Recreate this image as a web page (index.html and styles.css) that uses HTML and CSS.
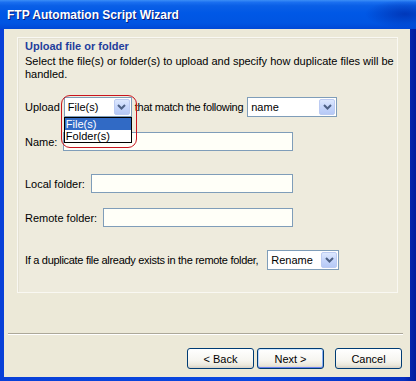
FILE: index.html
```html
<!DOCTYPE html>
<html lang="en">
<head>
  <meta charset="UTF-8" />
  <title>FTP Automation Script Wizard</title>
  <link rel="stylesheet" href="styles.css">
</head>
<body>
  <div class="window">
    <div class="titlebar">
      <span class="title">FTP Automation Script Wizard</span>
    </div>

    <div class="client">
      <div class="panel">
        <h1 class="heading">Upload file or folder</h1>
        <p class="desc">
          Select the file(s) or folder(s) to upload and specify how duplicate files will be<br>
          handled.
        </p>

        <div class="row row-upload">
          <span class="label">Upload</span>
          <div class="combo combo-type">
            <span class="combo-value">File(s)</span>
            <span class="combo-btn">
              <svg width="9" height="6" viewBox="0 0 9 6"><path d="M1 1 L4.5 4.5 L8 1" fill="none" stroke="#4d6185" stroke-width="2"/></svg>
            </span>
            <ul class="combo-list">
              <li class="selected">File(s)</li>
              <li>Folder(s)</li>
            </ul>
            <div class="callout"></div>
          </div>
          <span class="label label-match">that match the following</span>
          <div class="combo combo-match">
            <span class="combo-value">name</span>
            <span class="combo-btn">
              <svg width="9" height="6" viewBox="0 0 9 6"><path d="M1 1 L4.5 4.5 L8 1" fill="none" stroke="#4d6185" stroke-width="2"/></svg>
            </span>
          </div>
        </div>

        <div class="row row-field row-name">
          <span class="label">Name:</span>
          <div class="textbox"></div>
        </div>

        <div class="row row-field row-local">
          <span class="label">Local folder:</span>
          <div class="textbox"></div>
        </div>

        <div class="row row-field row-remote">
          <span class="label">Remote folder:</span>
          <div class="textbox"></div>
        </div>

        <div class="row row-dup">
          <span class="label">If a duplicate file already exists in the remote folder,</span>
          <div class="combo combo-dup">
            <span class="combo-value">Rename</span>
            <span class="combo-btn">
              <svg width="9" height="6" viewBox="0 0 9 6"><path d="M1 1 L4.5 4.5 L8 1" fill="none" stroke="#4d6185" stroke-width="2"/></svg>
            </span>
          </div>
        </div>
      </div>

      <div class="separator"></div>

      <div class="buttons">
        <button class="btn">&lt; Back</button>
        <button class="btn btn-default">Next &gt;</button>
        <button class="btn btn-cancel">Cancel</button>
      </div>
    </div>
  </div>
</body>
</html>
```

FILE: styles.css
```css
* {
  box-sizing: border-box;
  margin: 0;
  padding: 0;
}

body {
  background: #ffffff;
  font-family: 'Liberation Sans', Arial, sans-serif;
  font-size: 11px;
  color: #000;
}

.window {
  width: 416px;
  height: 381px;
  display: flex;
  flex-direction: column;
  padding: 0 6px 4px 4px;
  background: linear-gradient(90deg, #0840d8 0%, #0a48e0 60%, #0730c0 97%, #001c9c 100%);
}

.titlebar {
  height: 29px;
  margin: 0 -6px 0 -4px;
  padding: 1px 0 0 7px;
  display: flex;
  align-items: center;
  background:
    radial-gradient(ellipse 40px 14px at 405px 14px, rgba(0, 30, 150, 0.55), rgba(0, 30, 150, 0)),
    linear-gradient(180deg, #3c8ef6 0%, #1a6ff0 8%, #0a5fe6 20%, #0058e6 45%, #0055e2 80%, #0048d6 100%);
}

.title {
  color: #ffffff;
  font-weight: bold;
  font-size: 12px;
  text-shadow: 1px 1px 0 #0a1a78;
}

.client {
  flex: 1;
  background: #ece9d8;
  display: flex;
  flex-direction: column;
  padding: 8px 0 0 0;
}

.panel {
  height: 256px;
  margin: 0 12px 0 13px;
  padding: 2px 6px 0 7px;
  border: 1px solid #f9f8f2;
  box-shadow: inset 1px 1px 0 #e4e1d2;
  background: #eeebdd;
}

.heading {
  font-size: 11px;
  font-weight: bold;
  line-height: 13px;
  color: #1f3e9c;
}

.desc {
  margin-top: 2px;
  line-height: 13px;
  white-space: nowrap;
}

.row {
  display: flex;
  align-items: center;
}

.row-upload {
  margin-top: 16px;
  height: 20px;
}

.row-upload .label {
  margin-right: 4px;
}

.label-match {
  margin-left: 3px;
  margin-right: 8px;
  letter-spacing: -0.3px;
}

.row-field {
  width: 268px;
  height: 19px;
}

.row-field .label {
  margin-right: 6px;
}

.row-name {
  margin-top: 15px;
}

.row-local {
  margin-top: 23px;
}

.row-remote {
  margin-top: 15px;
}

.row-dup {
  margin-top: 23px;
  height: 20px;
}

.row-dup .label {
  margin-right: 9px;
  letter-spacing: -0.3px;
}

.textbox {
  flex: 1;
  height: 19px;
  border: 1px solid #7f9db9;
  background: #fffff8;
}

.combo {
  position: relative;
  height: 20px;
  border: 1px solid #7f9db9;
  background: #ffffff;
  display: flex;
  align-items: center;
  padding-left: 3px;
}

.combo-type {
  width: 68px;
}

.combo-match {
  width: 90px;
}

.combo-dup {
  width: 72px;
}

.combo-value {
  flex: 1;
}

.combo-btn {
  width: 16px;
  height: 16px;
  margin-right: 1px;
  border: 1px solid #bccbf2;
  border-radius: 2px;
  background: linear-gradient(180deg, #dde8fe 0%, #c6d6fb 50%, #b6c9f6 100%);
  display: flex;
  align-items: center;
  justify-content: center;
}

.combo-list {
  position: absolute;
  top: 19px;
  left: -1px;
  width: 68px;
  list-style: none;
  border: 1px solid #000000;
  background: #ffffff;
  z-index: 2;
}

.combo-list li {
  height: 12px;
  line-height: 12px;
  padding-left: 1px;
}

.combo-list .selected {
  background: #316ac5;
  color: #ffffff;
}

.callout {
  position: absolute;
  top: -3px;
  left: -4px;
  width: 76px;
  height: 53px;
  border: 1.5px solid #c8141e;
  border-radius: 9px;
  z-index: 3;
}

.separator {
  margin: 40px 7px 0 4px;
  height: 2px;
  border-top: 1px solid #aca899;
  border-bottom: 1px solid #ffffff;
}

.buttons {
  margin-top: 13px;
  padding-right: 8px;
  display: flex;
  justify-content: flex-end;
}

.btn {
  width: 67px;
  height: 21px;
  font-family: 'Liberation Sans', Arial, sans-serif;
  font-size: 11px;
  color: #000;
  border: 1px solid #003c74;
  border-radius: 3px;
  background: linear-gradient(180deg, #ffffff 0%, #f6f5f0 60%, #ebe8dc 85%, #d6d0c5 100%);
  margin-left: 3px;
}

.btn-default {
  box-shadow: inset 0 1px 0 #cee7ff, inset 0 -1px 0 #6982ee, inset 1px 0 0 #b8d4fe, inset -1px 0 0 #89adf4;
}

.btn-cancel {
  margin-left: 11px;
}
```
